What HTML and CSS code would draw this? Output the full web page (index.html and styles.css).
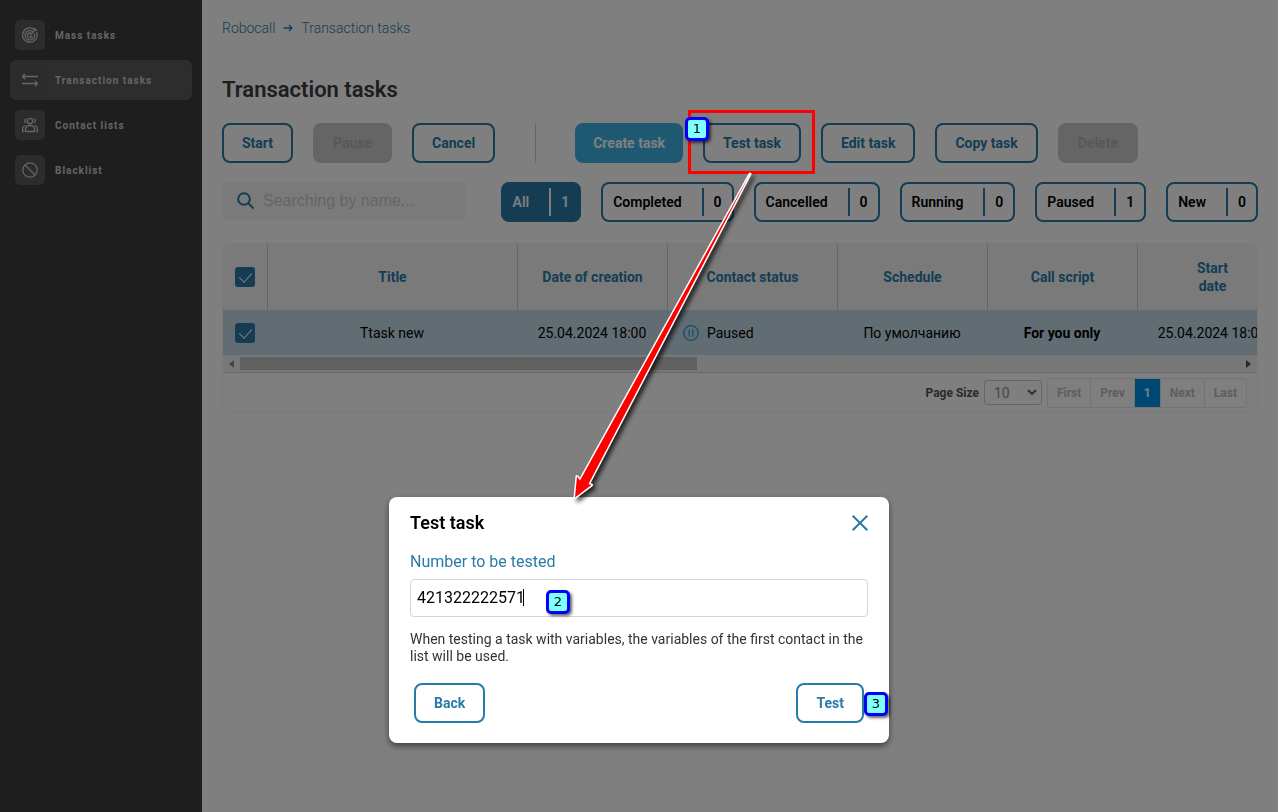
FILE: index.html
```html
<!DOCTYPE html>
<html lang="en">

<head>
    <meta charset="UTF-8">
    <meta name="viewport" content="width=device-width, initial-scale=1.0">
    <title>Transaction tasks</title>
    <link rel="stylesheet" href="styles.css">
</head>

<body>
    <div class="app">
        <nav class="sidebar">
            <a class="nav-item" href="#">
                <span class="nav-icon">
                    <svg width="16" height="16" viewBox="0 0 16 16">
                        <path d="M12.6 2.6A7.2 7.2 0 1 0 14.4 5M10.9 4.7A4.7 4.7 0 1 0 12.2 6.5M9.2 6.5A2.3 2.3 0 1 0 10 8.4" />
                        <path d="M7.7 8.4l6-6M12.8.8v2.4h2.6" />
                    </svg>
                </span>
                Mass tasks
            </a>
            <a class="nav-item active" href="#">
                <span class="nav-icon">
                    <svg width="16" height="16" viewBox="0 0 16 16">
                        <path d="M16 4.5H.8M3 2L.5 4.5 3 7M0 11.5h15.2M13 9l2.5 2.5L13 14" />
                    </svg>
                </span>
                Transaction tasks
            </a>
            <a class="nav-item" href="#">
                <span class="nav-icon">
                    <svg width="16" height="16" viewBox="0 0 16 16">
                        <circle cx="8" cy="4" r="2.7" />
                        <path d="M3.5 14.5V12a3.5 3.5 0 0 1 3.5-3.5h2a3.5 3.5 0 0 1 3.5 3.500v2.500zM3.700 1.700a2.800 2.800 0 0 0 0 4.200M12.300 1.700a2.800 2.800 0 0 1 0 4.200M3 8.500C1.400 9 .6 10.300.6 12v2.500h1.200M13 8.500c1.600.5 2.400 1.800 2.400 3.500v2.500h-1.200" />
                    </svg>
                </span>
                Contact lists
            </a>
            <a class="nav-item" href="#">
                <span class="nav-icon">
                    <svg width="16" height="16" viewBox="0 0 16 16">
                        <circle cx="8" cy="8" r="7.2" />
                        <path d="M3 3l10 10" />
                    </svg>
                </span>
                Blacklist
            </a>
        </nav>

        <main class="content">
            <div class="breadcrumbs">
                <a href="#">Robocall</a>
                <svg width="10" height="8" viewBox="0 0 10 8">
                    <path d="M.5 4h8.500M6 1l3 3-3 3" />
                </svg>
                <a href="#">Transaction tasks</a>
            </div>

            <h1>Transaction tasks</h1>

            <div class="toolbar">
                <button type="button" class="btn">Start</button>
                <button type="button" class="btn" disabled>Pause</button>
                <button type="button" class="btn">Cancel</button>
                <span class="separator"></span>
                <button type="button" class="btn primary">Create task</button>
                <button type="button" class="btn">Test task</button>
                <button type="button" class="btn">Edit task</button>
                <button type="button" class="btn">Copy task</button>
                <button type="button" class="btn" disabled>Delete</button>
            </div>

            <div class="filters">
                <label class="search">
                    <svg width="18" height="18" viewBox="0 0 18 18">
                        <circle cx="7" cy="7" r="5.800" />
                        <path d="M11.300 11.300l5.200 5.200" />
                    </svg>
                    <input type="text" placeholder="Searching by name..." aria-label="Searching by name">
                </label>
                <div class="chips">
                    <button type="button" class="chip selected"><span>All</span><b>1</b></button>
                    <button type="button" class="chip"><span>Completed</span><b>0</b></button>
                    <button type="button" class="chip"><span>Cancelled</span><b>0</b></button>
                    <button type="button" class="chip"><span>Running</span><b>0</b></button>
                    <button type="button" class="chip"><span>Paused</span><b>1</b></button>
                    <button type="button" class="chip"><span>New</span><b>0</b></button>
                </div>
            </div>

            <div class="grid">
                <div class="grid-scroll">
                    <table>
                        <colgroup>
                            <col class="col-check">
                            <col class="col-title">
                            <col class="col-date">
                            <col class="col-status">
                            <col class="col-date">
                            <col class="col-date">
                            <col class="col-date">
                        </colgroup>
                        <thead>
                            <tr>
                                <th><input type="checkbox" checked aria-label="Select all"></th>
                                <th>Title</th>
                                <th>Date of creation</th>
                                <th>Contact status</th>
                                <th>Schedule</th>
                                <th>Call script</th>
                                <th>Start<br>date</th>
                            </tr>
                        </thead>
                        <tbody>
                            <tr>
                                <td><input type="checkbox" checked aria-label="Select Ttask new"></td>
                                <td>Ttask new</td>
                                <td>25.04.2024 18:00</td>
                                <td>
                                    <span class="status">
                                        <svg width="16" height="16" viewBox="0 0 16 16">
                                            <circle cx="8" cy="8" r="7.300" />
                                            <path d="M6.200 4.500v7M9.800 4.500v7" />
                                        </svg>
                                        Paused
                                    </span>
                                </td>
                                <td>По умолчанию</td>
                                <td class="strong">For you only</td>
                                <td>25.04.2024 18:00</td>
                            </tr>
                        </tbody>
                    </table>
                </div>
                <div class="scrollbar">
                    <svg width="5" height="8" viewBox="0 0 5 8"><path class="off" d="M5 0v8L0 4z" /></svg>
                    <div class="track"><div class="thumb"></div></div>
                    <svg width="5" height="8" viewBox="0 0 5 8"><path d="M0 0v8l5-4z" /></svg>
                </div>
                <div class="grid-footer">
                    <label for="pageSize">Page Size</label>
                    <span class="select">
                        <select id="pageSize">
                            <option>10</option>
                            <option>25</option>
                            <option>50</option>
                        </select>
                        <svg width="10" height="7" viewBox="0 0 10 7"><path d="M1 1l4 4 4-4" /></svg>
                    </span>
                    <div class="pages">
                        <button type="button" disabled>First</button>
                        <button type="button" disabled>Prev</button>
                        <button type="button" class="current">1</button>
                        <button type="button" disabled>Next</button>
                        <button type="button" disabled>Last</button>
                    </div>
                </div>
            </div>
        </main>
    </div>

    <div class="overlay">
        <form class="modal" role="dialog" aria-labelledby="modalTitle">
            <div class="modal-head">
                <h2 id="modalTitle">Test task</h2>
                <button type="button" class="close" aria-label="Close">
                    <svg width="16" height="16" viewBox="0 0 16 16">
                        <path d="M.7.7l14.600 14.600M15.300.7L.7 15.300" />
                    </svg>
                </button>
            </div>
            <label for="number">Number to be tested</label>
            <div class="field">
                <input type="text" id="number" value="421322222571">
                <span class="caret"></span>
            </div>
            <p>When testing a task with variables, the variables of the first contact in the list will be used.</p>
            <div class="modal-actions">
                <button type="button" class="btn">Back</button>
                <button type="button" class="btn">Test</button>
            </div>
        </form>
    </div>

    <!-- guide marks -->
    <div class="marks">
        <div class="mark-box"></div>
        <svg class="mark-arrow" width="200" height="350" viewBox="0 0 200 350">
            <path d="M190 14L20 320.500 17 316.500 15 337.500 31.500 325 28.500 324z" />
        </svg>
        <span class="mark mark-1">1</span>
        <span class="mark mark-2">2</span>
        <span class="mark mark-3">3</span>
    </div>
</body>

</html>
```

FILE: styles.css
```css
* {
    box-sizing: border-box;
}

body {
    margin: 0;
    font-family: Roboto, Arial, sans-serif;
    font-size: 14px;
    color: #000;
    background-color: #fff;
}

a {
    text-decoration: none;
}

button,
input,
select {
    font-family: inherit;
}

svg {
    fill: none;
    flex-shrink: 0;
}

.app {
    display: flex;
    min-height: 100vh;
}

/* Sidebar */
.sidebar {
    width: 202px;
    flex-shrink: 0;
    padding: 15px 10px;
    background-color: #3c3c3c;
    display: flex;
    flex-direction: column;
    gap: 5px;
}

.nav-item {
    display: flex;
    align-items: center;
    gap: 10px;
    height: 40px;
    padding: 0 5px;
    border-radius: 6px;
    color: #cbcbcb;
    font-size: 10px;
    font-weight: 700;
    letter-spacing: 1px;
}

.nav-item.active {
    background-color: #5a5a5a;
}

.nav-icon {
    display: flex;
    align-items: center;
    justify-content: center;
    width: 30px;
    height: 30px;
    border-radius: 5px;
    background-color: #585858;
}

.nav-icon svg {
    stroke: #cbcbcb;
    stroke-width: 1.3;
}

/* Content */
.content {
    flex: 1;
    min-width: 0;
    padding: 20px;
}

.breadcrumbs {
    display: flex;
    align-items: center;
    gap: 8px;
    height: 16px;
}

.breadcrumbs a {
    color: #287ba9;
    font-weight: 300;
}

.breadcrumbs svg {
    stroke: #287ba9;
    stroke-width: 1.3;
}

h1 {
    margin: 40px 0 20px;
    font-size: 22px;
    line-height: 27px;
    font-weight: 600;
    color: #3c3c3c;
}

.toolbar {
    display: flex;
    gap: 20px;
}

.btn {
    height: 40px;
    padding: 0 18px;
    border: 2px solid #287ba9;
    border-radius: 8px;
    background-color: transparent;
    color: #287ba9;
    font-size: 14px;
    font-weight: 700;
    white-space: nowrap;
}

.btn:disabled {
    border-color: #cbcbcb;
    background-color: #cbcbcb;
    color: #b0b0b0;
}

.btn.primary {
    padding: 0 16px;
    border-color: #3fb0e3;
    background-color: #3fb0e3;
    color: #fff;
}

.separator {
    width: 1px;
    margin: 0 19px 0 20px;
    background-color: #cbcbcb;
}

.filters {
    display: flex;
    justify-content: space-between;
    margin: 19px 0 21px;
}

.search {
    display: flex;
    align-items: center;
    gap: 8px;
    width: 243px;
    height: 38px;
    padding: 0 15px;
    border-radius: 5px;
    background-color: #f5f5f5;
}

.search svg {
    stroke: #287ba9;
    stroke-width: 2;
}

.search input {
    width: 100%;
    padding: 0;
    border: none;
    outline: none;
    background: none;
    font-family: "Liberation Sans", Arial, sans-serif;
    font-size: 16px;
}

.search input::placeholder {
    color: #cbcbcb;
}

.chips {
    display: flex;
    gap: 20px;
}

.chip {
    display: flex;
    align-items: center;
    height: 40px;
    padding: 0 10px;
    border: 2px solid #287ba9;
    border-radius: 8px;
    background-color: transparent;
    color: #000;
    font-size: 14px;
    font-weight: 600;
}

.chip b {
    margin-left: 20px;
    padding-left: 10px;
    border-left: 2px solid #287ba9;
    line-height: 28px;
    font-weight: 600;
}

.chip.selected {
    background-color: #287ba9;
    color: #fff;
}

.chip.selected b {
    border-color: #fff;
}

/* Task table */
.grid {
    border: 1px solid #f5f5f5;
    border-radius: 8px;
    overflow: hidden;
}

.grid-scroll {
    overflow: hidden;
}

table {
    width: 1065px;
    table-layout: fixed;
    border-collapse: separate;
    border-spacing: 0;
}

.col-check {
    width: 45px;
}

.col-title {
    width: 250px;
}

.col-date {
    width: 150px;
}

.col-status {
    width: 170px;
}

th,
td {
    padding: 0;
    text-align: center;
    white-space: nowrap;
}

th {
    height: 66px;
    padding-bottom: 1px;
    border-right: 1px solid #cbcbcb;
    background-color: #f5f5f5;
    color: #287ba9;
    font-weight: 700;
    line-height: 18px;
}

td {
    height: 45px;
    padding-right: 1px;
    border-right: 1px solid #c0d4df;
    background-color: #c3d9e6;
}

.strong {
    font-weight: 700;
}

.status {
    display: flex;
    align-items: center;
    gap: 8px;
    padding-left: 15px;
}

.status svg {
    stroke: #1c9fe0;
    stroke-width: 1.3;
}

input[type="checkbox"] {
    appearance: none;
    display: block;
    position: relative;
    width: 20px;
    height: 20px;
    margin: 0 auto;
    border-radius: 3px;
    background-color: #287ba9;
}

input[type="checkbox"]:checked::after {
    content: "";
    position: absolute;
    left: 7px;
    top: 3px;
    width: 6px;
    height: 11px;
    border: solid #fff;
    border-width: 0 1px 1px 0;
    transform: rotate(42deg);
}

.scrollbar {
    display: flex;
    align-items: center;
    gap: 6px;
    height: 18px;
    padding: 0 6px;
    border-bottom: 1px solid #d5d5d5;
    background-color: #f1f1f1;
}

.scrollbar path {
    fill: #505050;
}

.scrollbar path.off {
    fill: #8b8b8b;
}

.track {
    flex: 1;
}

.thumb {
    width: 457px;
    height: 13px;
    background-color: #c1c1c1;
}

.grid-footer {
    display: flex;
    align-items: center;
    justify-content: flex-end;
    gap: 5px;
    height: 39px;
    padding: 0 10px;
    font-size: 12px;
}

.grid-footer label {
    color: #555;
    font-weight: 700;
}

.select {
    position: relative;
}

.select select {
    appearance: none;
    display: block;
    width: 58px;
    height: 25px;
    padding: 0 9px;
    border: 1px solid #ccc;
    border-radius: 3px;
    background-color: #fff;
    color: #8f8f8f;
    font-size: 14px;
}

.select svg {
    position: absolute;
    right: 5px;
    top: 9px;
    stroke: #666;
    stroke-width: 2;
}

.pages {
    display: flex;
    border: 1px solid #e6e6e6;
    border-radius: 3px;
}

.pages button {
    height: 28px;
    padding: 0 9px;
    border: none;
    border-right: 1px solid #e6e6e6;
    background: none;
    color: #bdbdbd;
    font-size: 12px;
    font-weight: 700;
}

.pages button:last-child {
    border-right: none;
}

.pages .current {
    background-color: #0090e8;
    color: #fff;
}

/* Modal */
.overlay {
    position: fixed;
    inset: 0;
    display: flex;
    align-items: flex-start;
    justify-content: center;
    padding-top: 497px;
    background-color: rgba(0, 0, 0, 0.5);
}

.modal {
    width: 500px;
    padding: 16px 21px 20px;
    border-radius: 8px;
    background-color: #fff;
    box-shadow: 0 3px 6px rgba(0, 0, 0, 0.5);
}

.modal-head {
    display: flex;
    align-items: center;
    justify-content: space-between;
    height: 20px;
    margin-bottom: 19px;
}

.modal h2 {
    margin: 0;
    font-size: 18px;
    line-height: 20px;
    font-weight: 600;
}

.close {
    display: flex;
    padding: 0;
    border: none;
    background: none;
}

.close svg {
    stroke: #287ba9;
    stroke-width: 2;
}

.modal label {
    display: block;
    margin-bottom: 7px;
    color: #287ba9;
    font-size: 16px;
    line-height: 20px;
}

.field {
    position: relative;
}

.field input {
    display: block;
    width: 100%;
    height: 38px;
    padding: 0 6px 2px;
    border: 1px solid #d5d5d5;
    border-radius: 4px;
    outline: none;
    font-size: 16px;
}

.caret {
    position: absolute;
    left: 113px;
    top: 10px;
    width: 1px;
    height: 17px;
    background-color: #000;
}

.modal p {
    margin: 14px 0 18px;
    color: #333;
    line-height: 17px;
}

.modal-actions {
    display: flex;
    justify-content: space-between;
    padding: 0 4px;
}

/* Guide marks over the page */
.marks {
    position: absolute;
    inset: 0;
    pointer-events: none;
}

.mark-box {
    position: absolute;
    left: 688px;
    top: 110px;
    width: 127px;
    height: 64px;
    border: 3px solid #f00;
}

.mark-arrow {
    position: absolute;
    left: 560px;
    top: 160px;
    overflow: visible;
    fill: #f00;
    stroke: #fff;
    stroke-width: 3;
    stroke-linejoin: round;
    paint-order: stroke;
    filter: drop-shadow(3px 3px 2px rgba(0, 0, 0, 0.7));
}

.mark {
    position: absolute;
    width: 24px;
    height: 24px;
    border: 3px solid #00f;
    border-radius: 5px;
    background-color: #80ffff;
    box-shadow: 2px 2px 3px rgba(0, 0, 0, 0.6);
    font-family: "DejaVu Sans", Verdana, sans-serif;
    font-size: 13px;
    line-height: 18px;
    text-align: center;
}

.mark-1 {
    left: 685px;
    top: 117px;
}

.mark-2 {
    left: 546px;
    top: 590px;
}

.mark-3 {
    left: 864px;
    top: 692px;
}
```
